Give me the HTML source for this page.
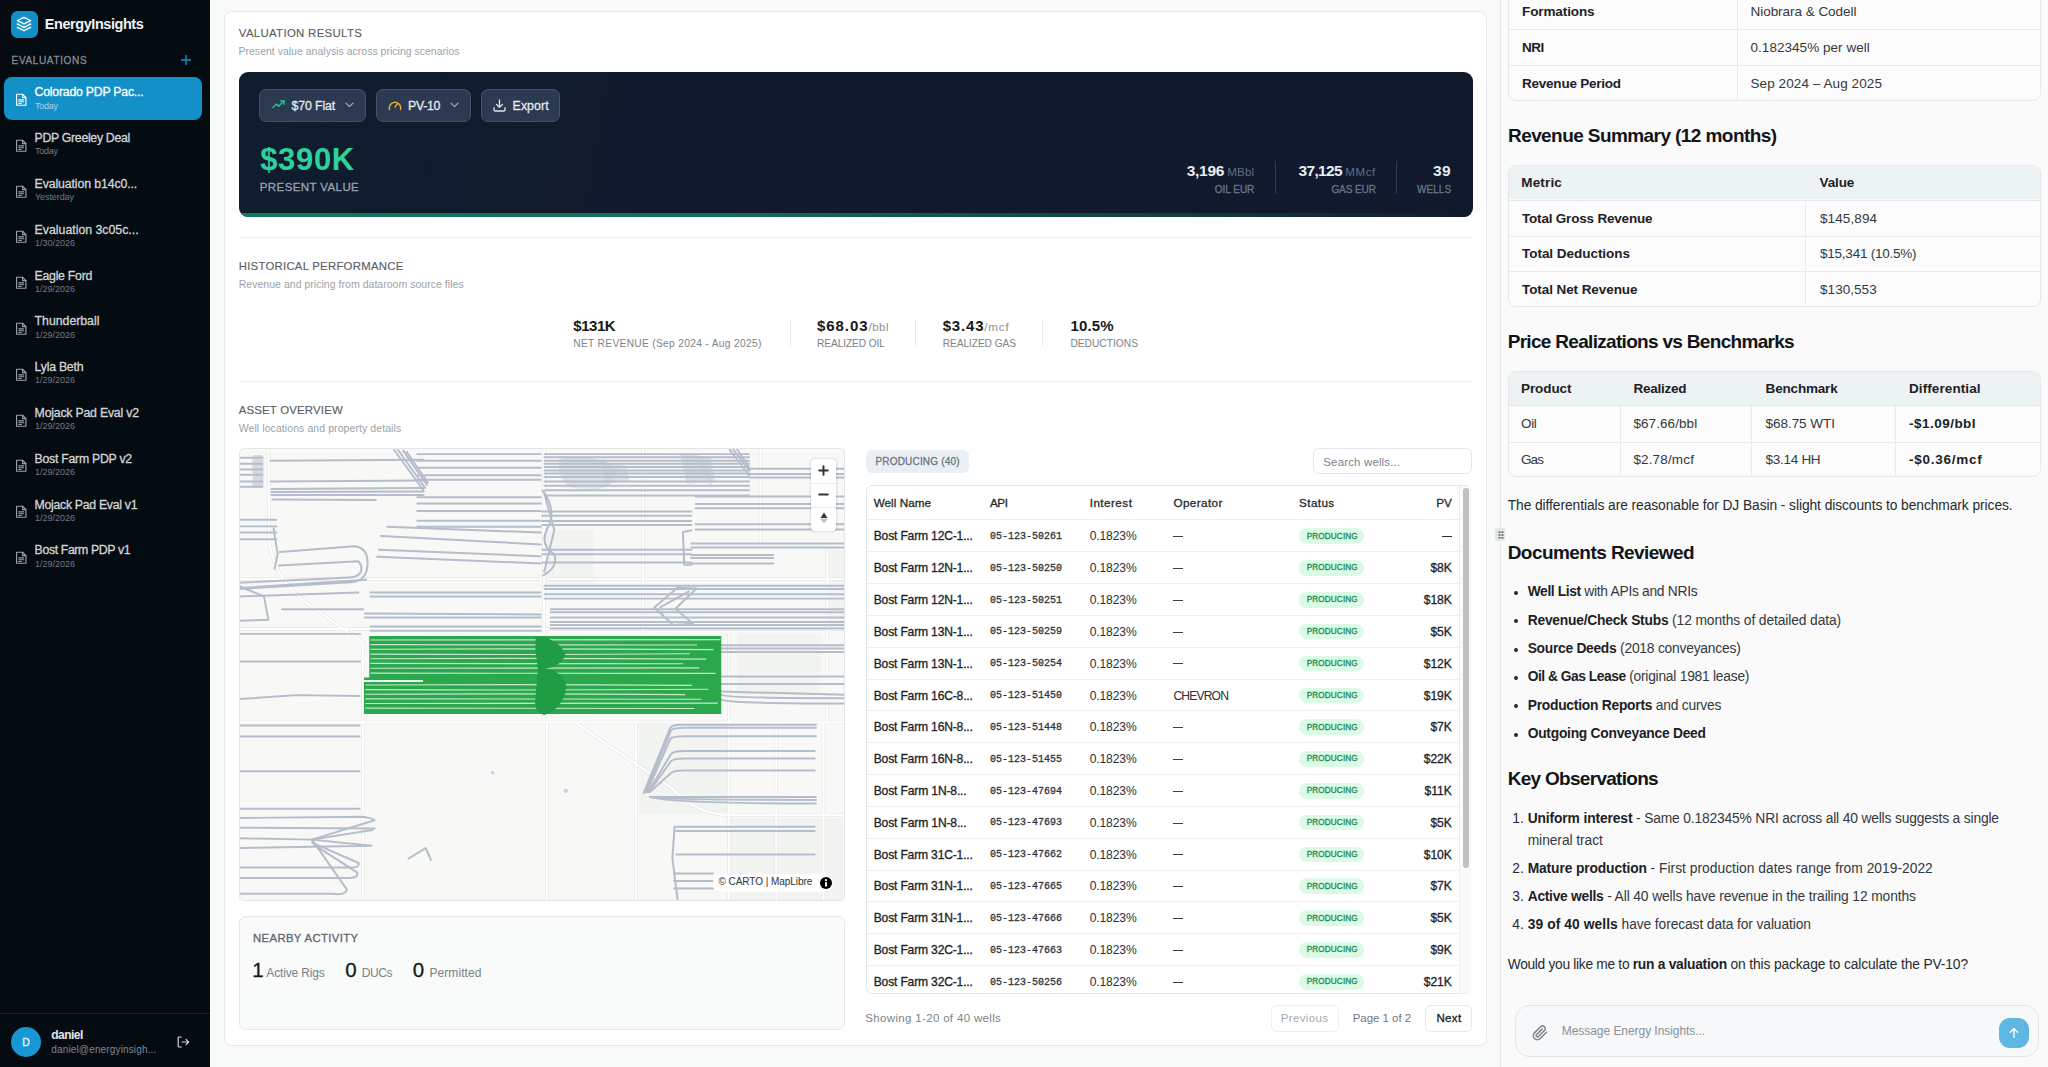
<!DOCTYPE html>
<html><head><meta charset="utf-8"><style>
*{box-sizing:border-box;margin:0;padding:0}
html,body{width:2048px;height:1067px;overflow:hidden;background:#f8f9f9;font-family:"Liberation Sans",sans-serif;color:#111}
.abs{position:absolute}
.t{position:absolute;line-height:1;white-space:nowrap}
.m{font-family:"Liberation Mono",monospace}
.sw{-webkit-text-stroke:0.3px currentColor}
.sw2{-webkit-text-stroke:0.12px currentColor}
</style></head><body>
<div class="abs" style="left:0px;top:0px;width:210px;height:1067px;background:#040c12"></div>
<div class="abs" style="left:11px;top:11px;width:26.6px;height:26.6px;border-radius:6.5px;background:#1190c8"><svg width="26" height="26" viewBox="0 0 26 26"><g fill="none" stroke="#fff" stroke-width="1.5" stroke-linejoin="round" stroke-linecap="round"><path d="M13 6.3 L19.6 9.6 L13 12.9 L6.4 9.6 Z"/><path d="M6.4 13 L13 16.3 L19.6 13"/><path d="M6.4 16.3 L13 19.6 L19.6 16.3"/></g></svg></div>
<div id="w1" class="t" style="left:44.8px;top:16.93px;font-size:14.5px;color:#f1f3f5;font-weight:700;letter-spacing:-0.442px;">EnergyInsights</div>
<div id="w2" class="t sw" style="left:11.6px;top:55.53px;font-size:10px;color:#858b92;letter-spacing:0.645px;">EVALUATIONS</div>
<svg class="abs" style="left:180px;top:54px" width="12" height="12" viewBox="0 0 12 12"><path d="M6 1.5V10.5M1.5 6H10.5" stroke="#1591c9" stroke-width="1.4" stroke-linecap="round"/></svg>
<div class="abs" style="left:4px;top:77.3px;width:198px;height:43px;background:#1390c8;border-radius:8px"></div>
<svg class="abs" style="left:14.6px;top:92.9px" width="12.5" height="13.5" viewBox="0 0 12 13"><g fill="none" stroke="#ffffff" stroke-width="1.1" stroke-linejoin="round" stroke-linecap="round"><path d="M1.5 1.2 H7.3 L10.5 4.4 V11.8 H1.5 Z"/><path d="M7.3 1.2 V4.4 H10.5"/><path d="M3.6 6.6 H8.3 M3.6 8.4 H8.3 M3.6 10.1 H6"/></g></svg>
<div id="w3" class="t sw" style="left:34.6px;top:86.39px;font-size:12.3px;color:#ffffff;letter-spacing:-0.236px;">Colorado PDP Pac...</div>
<div id="w4" class="t" style="left:35.0px;top:101.58px;font-size:9px;color:#a6d3ea;letter-spacing:-0.256px;">Today</div>
<svg class="abs" style="left:14.6px;top:138.7px" width="12.5" height="13.5" viewBox="0 0 12 13"><g fill="none" stroke="#9aa0a6" stroke-width="1.1" stroke-linejoin="round" stroke-linecap="round"><path d="M1.5 1.2 H7.3 L10.5 4.4 V11.8 H1.5 Z"/><path d="M7.3 1.2 V4.4 H10.5"/><path d="M3.6 6.6 H8.3 M3.6 8.4 H8.3 M3.6 10.1 H6"/></g></svg>
<div id="w5" class="t sw" style="left:34.6px;top:132.19px;font-size:12.3px;color:#d2d5d8;letter-spacing:-0.310px;">PDP Greeley Deal</div>
<div id="w6" class="t" style="left:35.0px;top:147.38px;font-size:9px;color:#737980;letter-spacing:-0.256px;">Today</div>
<svg class="abs" style="left:14.6px;top:184.5px" width="12.5" height="13.5" viewBox="0 0 12 13"><g fill="none" stroke="#9aa0a6" stroke-width="1.1" stroke-linejoin="round" stroke-linecap="round"><path d="M1.5 1.2 H7.3 L10.5 4.4 V11.8 H1.5 Z"/><path d="M7.3 1.2 V4.4 H10.5"/><path d="M3.6 6.6 H8.3 M3.6 8.4 H8.3 M3.6 10.1 H6"/></g></svg>
<div id="w7" class="t sw" style="left:34.6px;top:177.99px;font-size:12.3px;color:#d2d5d8;letter-spacing:-0.106px;">Evaluation b14c0...</div>
<div id="w8" class="t" style="left:35.0px;top:193.18px;font-size:9px;color:#737980;letter-spacing:-0.087px;">Yesterday</div>
<svg class="abs" style="left:14.6px;top:230.3px" width="12.5" height="13.5" viewBox="0 0 12 13"><g fill="none" stroke="#9aa0a6" stroke-width="1.1" stroke-linejoin="round" stroke-linecap="round"><path d="M1.5 1.2 H7.3 L10.5 4.4 V11.8 H1.5 Z"/><path d="M7.3 1.2 V4.4 H10.5"/><path d="M3.6 6.6 H8.3 M3.6 8.4 H8.3 M3.6 10.1 H6"/></g></svg>
<div id="w9" class="t sw" style="left:34.6px;top:223.79px;font-size:12.3px;color:#d2d5d8;letter-spacing:0.005px;">Evaluation 3c05c...</div>
<div id="w10" class="t" style="left:35.0px;top:238.98px;font-size:9px;color:#737980;letter-spacing:-0.007px;">1/30/2026</div>
<svg class="abs" style="left:14.6px;top:276.1px" width="12.5" height="13.5" viewBox="0 0 12 13"><g fill="none" stroke="#9aa0a6" stroke-width="1.1" stroke-linejoin="round" stroke-linecap="round"><path d="M1.5 1.2 H7.3 L10.5 4.4 V11.8 H1.5 Z"/><path d="M7.3 1.2 V4.4 H10.5"/><path d="M3.6 6.6 H8.3 M3.6 8.4 H8.3 M3.6 10.1 H6"/></g></svg>
<div id="w11" class="t sw" style="left:34.6px;top:269.59px;font-size:12.3px;color:#d2d5d8;letter-spacing:-0.272px;">Eagle Ford</div>
<div id="w12" class="t" style="left:35.0px;top:284.78px;font-size:9px;color:#737980;letter-spacing:-0.007px;">1/29/2026</div>
<svg class="abs" style="left:14.6px;top:321.9px" width="12.5" height="13.5" viewBox="0 0 12 13"><g fill="none" stroke="#9aa0a6" stroke-width="1.1" stroke-linejoin="round" stroke-linecap="round"><path d="M1.5 1.2 H7.3 L10.5 4.4 V11.8 H1.5 Z"/><path d="M7.3 1.2 V4.4 H10.5"/><path d="M3.6 6.6 H8.3 M3.6 8.4 H8.3 M3.6 10.1 H6"/></g></svg>
<div id="w13" class="t sw" style="left:34.6px;top:315.39px;font-size:12.3px;color:#d2d5d8;letter-spacing:-0.015px;">Thunderball</div>
<div id="w14" class="t" style="left:35.0px;top:330.58px;font-size:9px;color:#737980;letter-spacing:-0.007px;">1/29/2026</div>
<svg class="abs" style="left:14.6px;top:367.7px" width="12.5" height="13.5" viewBox="0 0 12 13"><g fill="none" stroke="#9aa0a6" stroke-width="1.1" stroke-linejoin="round" stroke-linecap="round"><path d="M1.5 1.2 H7.3 L10.5 4.4 V11.8 H1.5 Z"/><path d="M7.3 1.2 V4.4 H10.5"/><path d="M3.6 6.6 H8.3 M3.6 8.4 H8.3 M3.6 10.1 H6"/></g></svg>
<div id="w15" class="t sw" style="left:34.6px;top:361.19px;font-size:12.3px;color:#d2d5d8;letter-spacing:-0.241px;">Lyla Beth</div>
<div id="w16" class="t" style="left:35.0px;top:376.38px;font-size:9px;color:#737980;letter-spacing:-0.007px;">1/29/2026</div>
<svg class="abs" style="left:14.6px;top:413.5px" width="12.5" height="13.5" viewBox="0 0 12 13"><g fill="none" stroke="#9aa0a6" stroke-width="1.1" stroke-linejoin="round" stroke-linecap="round"><path d="M1.5 1.2 H7.3 L10.5 4.4 V11.8 H1.5 Z"/><path d="M7.3 1.2 V4.4 H10.5"/><path d="M3.6 6.6 H8.3 M3.6 8.4 H8.3 M3.6 10.1 H6"/></g></svg>
<div id="w17" class="t sw" style="left:34.6px;top:406.99px;font-size:12.3px;color:#d2d5d8;letter-spacing:-0.212px;">Mojack Pad Eval v2</div>
<div id="w18" class="t" style="left:35.0px;top:422.18px;font-size:9px;color:#737980;letter-spacing:-0.007px;">1/29/2026</div>
<svg class="abs" style="left:14.6px;top:459.3px" width="12.5" height="13.5" viewBox="0 0 12 13"><g fill="none" stroke="#9aa0a6" stroke-width="1.1" stroke-linejoin="round" stroke-linecap="round"><path d="M1.5 1.2 H7.3 L10.5 4.4 V11.8 H1.5 Z"/><path d="M7.3 1.2 V4.4 H10.5"/><path d="M3.6 6.6 H8.3 M3.6 8.4 H8.3 M3.6 10.1 H6"/></g></svg>
<div id="w19" class="t sw" style="left:34.6px;top:452.79px;font-size:12.3px;color:#d2d5d8;letter-spacing:-0.273px;">Bost Farm PDP v2</div>
<div id="w20" class="t" style="left:35.0px;top:467.98px;font-size:9px;color:#737980;letter-spacing:-0.007px;">1/29/2026</div>
<svg class="abs" style="left:14.6px;top:505.1px" width="12.5" height="13.5" viewBox="0 0 12 13"><g fill="none" stroke="#9aa0a6" stroke-width="1.1" stroke-linejoin="round" stroke-linecap="round"><path d="M1.5 1.2 H7.3 L10.5 4.4 V11.8 H1.5 Z"/><path d="M7.3 1.2 V4.4 H10.5"/><path d="M3.6 6.6 H8.3 M3.6 8.4 H8.3 M3.6 10.1 H6"/></g></svg>
<div id="w21" class="t sw" style="left:34.6px;top:498.59px;font-size:12.3px;color:#d2d5d8;letter-spacing:-0.300px;">Mojack Pad Eval v1</div>
<div id="w22" class="t" style="left:35.0px;top:513.78px;font-size:9px;color:#737980;letter-spacing:-0.007px;">1/29/2026</div>
<svg class="abs" style="left:14.6px;top:550.9px" width="12.5" height="13.5" viewBox="0 0 12 13"><g fill="none" stroke="#9aa0a6" stroke-width="1.1" stroke-linejoin="round" stroke-linecap="round"><path d="M1.5 1.2 H7.3 L10.5 4.4 V11.8 H1.5 Z"/><path d="M7.3 1.2 V4.4 H10.5"/><path d="M3.6 6.6 H8.3 M3.6 8.4 H8.3 M3.6 10.1 H6"/></g></svg>
<div id="w23" class="t sw" style="left:34.6px;top:544.39px;font-size:12.3px;color:#d2d5d8;letter-spacing:-0.374px;">Bost Farm PDP v1</div>
<div id="w24" class="t" style="left:35.0px;top:559.58px;font-size:9px;color:#737980;letter-spacing:-0.007px;">1/29/2026</div>
<div class="abs" style="left:0px;top:1013px;width:210px;height:1px;background:#1a2026"></div>
<div class="abs" style="left:11px;top:1027px;width:30px;height:30px;border-radius:50%;background:#1797d3"></div>
<div class="t sw" style="left:22.3px;top:1037.11px;font-size:10.5px;color:#eaf6fc;">D</div>
<div id="w25" class="t" style="left:51.3px;top:1029.04px;font-size:12px;color:#e3e5e8;font-weight:700;letter-spacing:-0.536px;">daniel</div>
<div id="w26" class="t" style="left:51.3px;top:1044.74px;font-size:10px;color:#80868c;letter-spacing:0.148px;">daniel@energyinsigh...</div>
<svg class="abs" style="left:176.5px;top:1036px" width="13" height="12" viewBox="0 0 13 12"><g fill="none" stroke="#d5d8db" stroke-width="1.2" stroke-linecap="round" stroke-linejoin="round"><path d="M4.3 1H2.2Q1.2 1 1.2 2V10Q1.2 11 2.2 11H4.3"/><path d="M5 6H11.6M9 3.4L11.6 6L9 8.6"/></g></svg>
<div class="abs" style="left:224px;top:11px;width:1263px;height:1035px;background:#fff;border:1px solid #e7e9ea;border-radius:8px"></div>
<div id="w27" class="t sw2" style="left:238.8px;top:28.15px;font-size:11.4px;color:#575d63;letter-spacing:0.329px;">VALUATION RESULTS</div>
<div id="w28" class="t" style="left:238.5px;top:45.81px;font-size:10.5px;color:#9ca2a8;letter-spacing:0.009px;">Present value analysis across pricing scenarios</div>
<div class="abs" style="left:238.5px;top:71.7px;width:1234.3px;height:145px;border-radius:9px;overflow:hidden;background:linear-gradient(100deg,#0f1d2e 0%,#111a2c 40%,#111a2c 100%)"><div class="abs" style="left:0;bottom:0;width:100%;height:4px;background:linear-gradient(90deg,#13795c 0%,#136d58 40%,#12303a 85%,#111a2c 100%)"></div></div>
<div class="abs" style="left:259.3px;top:89.1px;width:106.5px;height:33.2px;background:#2b3a51;border:1px solid #44536b;border-radius:7px"></div><svg class="abs" style="left:271.5px;top:100px" width="13" height="9" viewBox="0 0 13 9"><g fill="none" stroke="#2ec99a" stroke-width="1.3" stroke-linecap="round" stroke-linejoin="round"><path d="M0.8 7.6L4.4 4L6.6 6.2L12 0.9"/><path d="M8.6 0.9H12V4.2"/></g></svg><div id="w29" class="t sw" style="left:291.6px;top:99.79px;font-size:12.3px;color:#e6e9ee;letter-spacing:-0.121px;">$70 Flat</div><svg class="abs" style="left:344.5px;top:102px" width="9" height="6" viewBox="0 0 9 6"><path d="M1 1.2L4.5 4.6L8 1.2" fill="none" stroke="#aab3c0" stroke-width="1.1" stroke-linecap="round" stroke-linejoin="round"/></svg>
<div class="abs" style="left:376px;top:89.1px;width:94.7px;height:33.2px;background:#2b3a51;border:1px solid #44536b;border-radius:7px"></div><svg class="abs" style="left:387.5px;top:98.5px" width="14" height="12" viewBox="0 0 14 12"><g fill="none" stroke="#eaa72a" stroke-width="1.4" stroke-linecap="round"><path d="M1.5 10.5A5.7 5.7 0 1 1 12.5 10.5"/><path d="M7 8L9.6 4.6"/></g></svg><div id="w30" class="t sw" style="left:408.0px;top:99.79px;font-size:12.3px;color:#e6e9ee;letter-spacing:-0.300px;">PV-10</div><svg class="abs" style="left:450px;top:102px" width="9" height="6" viewBox="0 0 9 6"><path d="M1 1.2L4.5 4.6L8 1.2" fill="none" stroke="#aab3c0" stroke-width="1.1" stroke-linecap="round" stroke-linejoin="round"/></svg>
<div class="abs" style="left:481px;top:89.1px;width:79px;height:33.2px;background:#2b3a51;border:1px solid #44536b;border-radius:7px"></div><svg class="abs" style="left:493px;top:98.5px" width="13" height="13" viewBox="0 0 13 13"><g fill="none" stroke="#dfe4ea" stroke-width="1.3" stroke-linecap="round" stroke-linejoin="round"><path d="M6.5 1V8.3M3.6 5.5L6.5 8.4L9.4 5.5"/><path d="M1 8.6V10.8Q1 12 2.2 12H10.8Q12 12 12 10.8V8.6"/></g></svg><div id="w31" class="t sw" style="left:512.6px;top:99.79px;font-size:12.3px;color:#e6e9ee;letter-spacing:0.089px;">Export</div>
<div id="w32" class="t" style="left:260.2px;top:144.26px;font-size:31px;color:#2fd09b;font-weight:700;letter-spacing:0.662px;">$390K</div>
<div id="w33" class="t sw" style="left:259.8px;top:182.37px;font-size:11.5px;color:#97a3b4;letter-spacing:0.403px;">PRESENT VALUE</div>
<div class="t" style="right:793.7px;top:162.88px;font-size:15.5px;color:#e9edf2;"><span id="w34" style="font-weight:700;letter-spacing:-0.273px;">3,196</span><span style="font-size:11.5px"> </span><span id="w35" style="color:#5f6e85;letter-spacing:0.199px;font-size:11.5px;">MBbl</span></div><div id="w36" class="t sw" style="right:793.7px;top:184.63px;font-size:10px;color:#66758a;letter-spacing:-0.007px;margin-right:0.007px;">OIL EUR</div>
<div class="abs" style="left:1275px;top:161.4px;width:1px;height:33px;background:#2f3b4f"></div>
<div class="t" style="right:672.1px;top:162.88px;font-size:15.5px;color:#e9edf2;"><span id="w37" style="font-weight:700;letter-spacing:-0.664px;">37,125</span><span style="font-size:11.5px"> </span><span id="w38" style="color:#5f6e85;letter-spacing:0.665px;font-size:11.5px;">MMcf</span></div><div id="w39" class="t sw" style="right:672.1px;top:184.63px;font-size:10px;color:#66758a;letter-spacing:-0.087px;margin-right:0.087px;">GAS EUR</div>
<div class="abs" style="left:1396.3px;top:161.4px;width:1px;height:33px;background:#2f3b4f"></div>
<div class="t" style="right:596.9px;top:162.88px;font-size:15.5px;color:#e9edf2;"><span id="w40" style="font-weight:700;letter-spacing:0.444px;">39</span></div><div id="w41" class="t sw" style="right:596.9px;top:184.63px;font-size:10px;color:#66758a;letter-spacing:0.022px;margin-right:-0.022px;">WELLS</div>
<div class="abs" style="left:238.5px;top:237px;width:1234.3px;height:1px;background:#eef0f1"></div>
<div id="w42" class="t sw2" style="left:238.7px;top:260.65px;font-size:11.4px;color:#575d63;letter-spacing:0.243px;">HISTORICAL PERFORMANCE</div>
<div id="w43" class="t" style="left:238.7px;top:278.81px;font-size:10.5px;color:#9ca2a8;letter-spacing:0.032px;">Revenue and pricing from dataroom source files</div>
<div class="t" style="left:573.3px;top:318.20px;font-size:15px;color:#16191c;"><span id="w44" style="font-weight:700;letter-spacing:-0.451px;">$131K</span></div><div id="w45" class="t" style="left:573.3px;top:339.47px;font-size:10.2px;color:#7c8389;letter-spacing:0.324px;">NET REVENUE (Sep 2024 - Aug 2025)</div>
<div class="abs" style="left:789.6px;top:319.4px;width:1px;height:27px;background:#e8eaec"></div>
<div class="t" style="left:817.0px;top:318.20px;font-size:15px;color:#16191c;"><span id="w46" style="font-weight:700;letter-spacing:0.942px;">$68.03</span><span id="w47" style="color:#8a9096;letter-spacing:0.485px;font-size:11.5px;">/bbl</span></div><div id="w48" class="t" style="left:817.0px;top:339.47px;font-size:10.2px;color:#7c8389;letter-spacing:-0.098px;">REALIZED OIL</div>
<div class="abs" style="left:915.2px;top:319.4px;width:1px;height:27px;background:#e8eaec"></div>
<div class="t" style="left:942.7px;top:318.20px;font-size:15px;color:#16191c;"><span id="w49" style="font-weight:700;letter-spacing:0.814px;">$3.43</span><span id="w50" style="color:#8a9096;letter-spacing:0.857px;font-size:11.5px;">/mcf</span></div><div id="w51" class="t" style="left:942.7px;top:339.47px;font-size:10.2px;color:#7c8389;letter-spacing:-0.079px;">REALIZED GAS</div>
<div class="abs" style="left:1042.4px;top:319.4px;width:1px;height:27px;background:#e8eaec"></div>
<div class="t" style="left:1070.4px;top:318.20px;font-size:15px;color:#16191c;"><span id="w52" style="font-weight:700;letter-spacing:0.191px;">10.5%</span></div><div id="w53" class="t" style="left:1070.4px;top:339.47px;font-size:10.2px;color:#7c8389;letter-spacing:0.027px;">DEDUCTIONS</div>
<div class="abs" style="left:238.5px;top:380.9px;width:1234.3px;height:1px;background:#eef0f1"></div>
<div id="w54" class="t sw2" style="left:238.7px;top:404.65px;font-size:11.4px;color:#575d63;letter-spacing:0.192px;">ASSET OVERVIEW</div>
<div id="w55" class="t" style="left:238.7px;top:423.11px;font-size:10.5px;color:#9ca2a8;letter-spacing:0.082px;">Well locations and property details</div>
<svg class="abs" style="left:238.5px;top:448.4px" width="606.8" height="453" viewBox="19.3 19.1 1377.4 1028.2" preserveAspectRatio="none"><rect x="19.3" y="19.1" width="1377.4" height="1028.2" fill="#f8f8f6"/><g fill="#f2f4f1"><rect x="708" y="206" width="116" height="121"/><rect x="925" y="645" width="205" height="205"/><rect x="1135" y="860" width="255" height="185"/><rect x="1360" y="250" width="35" height="180"/><rect x="1150" y="440" width="190" height="140"/></g><g fill="#c9cfd7"><path d="M745 45 Q790 30 850 50 L880 70 Q870 110 830 112 L775 110 Q742 95 745 45Z" opacity="0.55"/><path d="M840 50 L900 60 L905 95 L850 100Z" opacity="0.5"/><rect x="50" y="35" width="25" height="75" rx="6" opacity="0.7"/><path d="M1020 30 L1090 40 L1100 95 L1035 100Z" opacity="0.6"/><path d="M1065 45 Q1100 90 1090 110" opacity="0.5"/><circle cx="595" cy="756" r="4"/><circle cx="761" cy="797" r="5"/></g><g fill="none" stroke="#e2e2df" stroke-width="7.5"><path d="M86 19 L88 230 Q100 330 200 390 L300 460 L300 1047"/><path d="M19 642 L1395 642"/><path d="M712 19 L712 640"/><path d="M718 642 L718 1047"/><path d="M920 642 L920 1047"/><path d="M937 19 L937 440"/><path d="M1203 19 L1203 240"/><path d="M1355 240 L1355 642"/><path d="M1131 440 L1131 1047"/><path d="M1239 642 L1239 1047"/><path d="M1346 642 L1346 1047"/><path d="M781 642 L1000 790 Q1060 852 1130 852 L1395 852"/><path d="M19 430 L1395 430"/><path d="M19 317 L700 317"/><path d="M720 317 L1395 317"/></g><g fill="none" stroke="#ffffff" stroke-width="5"><path d="M86 19 L88 230 Q100 330 200 390 L300 460 L300 1047"/><path d="M19 642 L1395 642"/><path d="M712 19 L712 640"/><path d="M718 642 L718 1047"/><path d="M920 642 L920 1047"/><path d="M937 19 L937 440"/><path d="M1203 19 L1203 240"/><path d="M1355 240 L1355 642"/><path d="M1131 440 L1131 1047"/><path d="M1239 642 L1239 1047"/><path d="M1346 642 L1346 1047"/><path d="M781 642 L1000 790 Q1060 852 1130 852 L1395 852"/><path d="M19 430 L1395 430"/><path d="M19 317 L700 317"/><path d="M720 317 L1395 317"/></g><g fill="none" stroke="#b4bdca" stroke-width="4.5" stroke-linecap="round" stroke-linejoin="round"><path d="M19 41 L72 41"/><path d="M19 55 L72 55"/><path d="M19 68 L72 68"/><path d="M19 80 L72 80"/><path d="M19 95 L72 95"/><path d="M19 107 L72 107"/><path d="M91 48 L438 46"/><path d="M91 95 L438 93"/><path d="M93 112 L438 110"/><path d="M93 119 L438 118"/><path d="M93 126 L438 126"/><path d="M95 136 L330 137"/><path d="M371 23 L438 115"/><path d="M380 23 L442 110"/><path d="M392 25 L446 103"/><path d="M400 28 L448 98"/><path d="M424 33 L704 33"/><path d="M424 48 L704 48"/><path d="M424 64 L704 64"/><path d="M424 81 L704 81"/><path d="M424 91 L704 91"/><path d="M424 131 L704 131"/><path d="M424 145 L704 145"/><path d="M424 162 L704 162"/><path d="M424 184 L704 184"/><path d="M424 198 L704 198"/><path d="M356 198 L704 211"/><path d="M342 219 L704 238"/><path d="M337 250 L704 265"/><path d="M333 266 L704 281"/><path d="M112 255 L281 242 Q313 245 311 284 Q309 322 272 324 L19 339"/><path d="M110 286 L290 276 Q300 285 296 300 Q290 312 270 313 L19 325"/><path d="M19 182 L104 182"/><path d="M19 197 L104 197"/><path d="M19 211 L104 211"/><path d="M19 226 L104 226"/><path d="M98 202 L107 260 L100 293"/><path d="M18 337 L308 318"/><path d="M18 356 L290 347"/><path d="M117 385 L301 385"/><path d="M18 332 L76 356 L86 409 L18 411"/><path d="M18 441 L294 441"/><path d="M18 503.5 L294 503.5"/><path d="M18 589 L150 580 L293 582"/><path d="M318 347 L704 347"/><path d="M318 356 L704 356"/><path d="M305 395 L704 397"/><path d="M305 404 L704 404"/><path d="M318 424 L704 424"/><path d="M318 434 L704 434"/><path d="M713 33 L1177 33"/><path d="M713 40 L1177 40"/><path d="M713 48 L1177 48"/><path d="M713 55 L1177 55"/><path d="M713 62 L1177 62"/><path d="M713 70 L1177 70"/><path d="M713 77 L1177 77"/><path d="M713 85 L1177 85"/><path d="M713 95 L1177 95"/><path d="M713 105 L1177 105"/><path d="M713 115 L1177 115"/><path d="M713 127 L1177 127"/><path d="M1177 66 L1394 66"/><path d="M1177 78 L1394 78"/><path d="M1177 86 L1394 86"/><path d="M1133 23 L1177 81"/><path d="M1140 21 L1178 70"/><path d="M1150 22 L1176 60"/><path d="M1056 129 L1394 129"/><path d="M1056 146 L1394 146"/><path d="M1056 156 L1394 156"/><path d="M1056 192 L1394 192"/><path d="M1056 204 L1394 204"/><path d="M708 163 L1046 163"/><path d="M708 173 L1046 173"/><path d="M708 185 L1046 185"/><path d="M708 194 L1046 194"/><path d="M1046 206 L1027 210 L1030 284 L1046 284"/><path d="M1046 236 L1394 236"/><path d="M1046 245 L1394 245"/><path d="M708 250 L1046 250"/><path d="M708 260 L1046 260"/><path d="M708 279 L1046 279"/><path d="M1046 262 L1232 262"/><path d="M1046 269 L1232 269"/><path d="M1046 281 L1232 281"/><path d="M708 115 Q742 160 720 200 Q700 240 735 260 Q745 290 710 308"/><path d="M712 120 L735 205 L712 300"/><path d="M713 332 L1394 332"/><path d="M713 339 L1394 339"/><path d="M713 351 L1394 351"/><path d="M713 361 L1394 361"/><path d="M727 385 L1394 385"/><path d="M727 392 L1394 392"/><path d="M727 404 L1394 404"/><path d="M727 414 L1394 414"/><path d="M727 421 L1394 421"/><path d="M727 429 L1394 429"/><path d="M962 381 L1015 336 L1058 338 L1010 384 L1050 418 L1005 421 Z"/><path d="M975 381 L1040 345"/><path d="M1114 467 L1394 467"/><path d="M1114 474 L1394 474"/><path d="M1114 482 L1394 482"/><path d="M18 649 L293 649"/><path d="M18 674 L293 674"/><path d="M18 753 L293 753"/><path d="M18 838 L293 838"/><path d="M18 859 L300 856 Q325 860 327 864 L185 908"/><path d="M18 881 L327 883"/><path d="M18 905 L185 908 L322 886"/><path d="M18 927 L320 922 L185 908"/><path d="M185 908 L264 1021 Q262 1035 231 1031 L18 1031"/><path d="M185 915 L291 961 Q292 972 276 971 L18 971"/><path d="M190 920 L288 983 Q290 995 270 995 L18 995"/><path d="M404 951 L443 927 L455 954"/><path d="M1114 538 L1394 538"/><path d="M1114 555 L1394 555"/><path d="M1114 579 Q1125 587 1394 587"/><path d="M1114 590 Q1130 599 1394 599"/><path d="M1114 572 L1394 579"/><path d="M938 802 L998 655 Q1002 647 1020 647 L1329 647"/><path d="M942 801 L1000 660 Q1006 654 1030 654 L1329 654"/><path d="M945 800 L998 680 Q1003 673.5 1030 673.5 L1329 673.5"/><path d="M948 800 L1000 714 Q1006 707 1030 707 L1326 707"/><path d="M950 800 L1000 730 Q1006 724 1030 724 L1326 724"/><path d="M952 800 L1000 757 Q1006 751 1030 751 L1326 751"/><path d="M952 811 L1329 811"/><path d="M952 811 Q990 818 1329 818"/><path d="M952 811 Q1000 826 1329 826"/><path d="M1012 879 L1326 879"/><path d="M1012 888.5 L1326 888.5"/><path d="M1012 941.6 L1326 941.6"/><path d="M1007 985 L1095 985"/><path d="M1007 1002 L1095 1002"/><path d="M1007 1019 L1095 1019"/><path d="M1008 879 L1003 950 L1015 1045"/></g><path d="M315 446 L1114 446 L1114 623 L303 623 L303 540 L315 540 Z" fill="#2aa84b"/><g fill="none" stroke="#d9f0de" stroke-width="2.6" opacity="0.9"><path d="M318 455 Q700 453 1112 454.2"/><path d="M318 465.5 Q700 467.5 1059 466.3"/><path d="M318 476 Q700 474 1096 476.8"/><path d="M318 487 Q700 489 1043 486.2"/><path d="M318 497.5 Q700 495.5 1080 498.3"/><path d="M318 508 Q700 510 1027 508.8"/><path d="M318 519 Q700 517 1064 518.2"/><path d="M318 530 Q700 532 1101 530.8"/><path d="M306 557 Q700 555 1048 557.8"/><path d="M306 567.5 Q700 569.5 1085 566.7"/><path d="M306 578 Q700 576 1032 578.8"/><path d="M306 588.5 Q700 590.5 1069 589.3"/><path d="M306 599 Q700 597 1106 598.2"/><path d="M306 609.5 Q700 611.5 1053 610.3"/></g><path d="M303 548 L437 548" stroke="#eef6f0" stroke-width="5"/><path d="M693 446 Q740 450 760 485 Q757 512 715 520 Q762 530 762 562 Q755 612 712 625 Q688 618 692 588 L698 522 L692 480Z" fill="#1f9d44"/></svg>
<div class="abs" style="left:238.5px;top:448.4px;width:606.8px;height:453px;border:1px solid #e3e5e7;border-radius:6px"></div>
<div class="abs" style="left:811.2px;top:458.7px;width:24.4px;height:72.3px;background:#fff;border-radius:4px;box-shadow:0 0 0 1.5px rgba(0,0,0,0.07)"><div class="abs" style="left:0;top:24px;width:24.4px;height:1px;background:#ececec"></div><div class="abs" style="left:0;top:48px;width:24.4px;height:1px;background:#ececec"></div></div>
<svg class="abs" style="left:818px;top:465px" width="11" height="11" viewBox="0 0 11 11"><path d="M5.5 1.2V9.8M1.2 5.5H9.8" stroke="#333" stroke-width="2" stroke-linecap="round"/></svg>
<svg class="abs" style="left:818px;top:489px" width="11" height="11" viewBox="0 0 11 11"><path d="M1.2 5.5H9.8" stroke="#333" stroke-width="2" stroke-linecap="round"/></svg>
<svg class="abs" style="left:818.5px;top:511px" width="10" height="14" viewBox="0 0 10 14"><path d="M5 1.5L8.5 7H1.5Z" fill="#333"/><path d="M5 12.5L8.5 7.8H1.5Z" fill="#bbb"/></svg>
<div class="abs" style="left:713px;top:873.7px;width:119.8px;height:18.3px;background:rgba(255,255,255,0.85);border-radius:9px"></div>
<div id="w56" class="t" style="left:718.4px;top:877.33px;font-size:10px;color:#333;letter-spacing:-0.037px;">© CARTO | MapLibre</div>
<svg class="abs" style="left:820.2px;top:876.7px" width="12" height="12" viewBox="0 0 12 12"><circle cx="6" cy="6" r="6" fill="#000"/><circle cx="6" cy="3.2" r="1.1" fill="#fff"/><rect x="5" y="5" width="2" height="4.6" rx="0.6" fill="#fff"/></svg>
<div class="abs" style="left:238.5px;top:915.5px;width:606.8px;height:114.5px;background:#f9fafa;border:1px solid #e5e7e9;border-radius:7px"></div>
<div id="w57" class="t sw" style="left:253.0px;top:932.93px;font-size:11.3px;color:#5f666c;letter-spacing:0.385px;">NEARBY ACTIVITY</div>
<div class="t sw" style="left:252.3px;top:960.15px;font-size:20.5px;color:#16191c;">1</div>
<div id="w58" class="t" style="left:266.3px;top:967.34px;font-size:12px;color:#7a8187;letter-spacing:-0.153px;">Active Rigs</div>
<div class="t sw" style="left:345.3px;top:960.15px;font-size:20.5px;color:#16191c;">0</div>
<div id="w59" class="t" style="left:361.7px;top:967.34px;font-size:12px;color:#7a8187;letter-spacing:-0.402px;">DUCs</div>
<div class="t sw" style="left:412.7px;top:960.15px;font-size:20.5px;color:#16191c;">0</div>
<div id="w60" class="t" style="left:429.4px;top:967.34px;font-size:12px;color:#7a8187;letter-spacing:0.080px;">Permitted</div>
<div class="abs" style="left:866.2px;top:450.2px;width:102.6px;height:22.6px;background:#e9eff3;border-radius:6px"></div>
<div id="w61" class="t sw" style="left:875.5px;top:456.64px;font-size:10px;color:#6b7781;letter-spacing:0.178px;">PRODUCING (40)</div>
<div class="abs" style="left:1312.6px;top:448.4px;width:159.2px;height:26px;background:#fff;border:1px solid #e4e7e9;border-radius:6px"></div>
<div id="w62" class="t" style="left:1323.3px;top:457.27px;font-size:11.5px;color:#7b848c;letter-spacing:0.143px;">Search wells...</div>
<div class="abs" style="left:865.7px;top:485.4px;width:605.7px;height:509px;background:#fff;border:1px solid #e4e6e8;border-radius:6px"></div>
<div class="abs" style="left:1459.4px;top:486.4px;width:11.3px;height:507px;background:#fafafa;border-left:1px solid #eeeff0;border-radius:0 5px 5px 0"></div>
<div class="abs" style="left:1462.8px;top:488.4px;width:6.2px;height:380px;background:#c1c1c1;border-radius:3px"></div>
<div id="w63" class="t sw" style="left:873.7px;top:497.00px;font-size:11.7px;color:#262a2e;letter-spacing:0.056px;">Well Name</div>
<div id="w64" class="t sw" style="left:989.9px;top:497.00px;font-size:11.7px;color:#262a2e;letter-spacing:-0.421px;">API</div>
<div id="w65" class="t sw" style="left:1089.7px;top:497.00px;font-size:11.7px;color:#262a2e;letter-spacing:0.459px;">Interest</div>
<div id="w66" class="t sw" style="left:1173.4px;top:497.00px;font-size:11.7px;color:#262a2e;letter-spacing:0.409px;">Operator</div>
<div id="w67" class="t sw" style="left:1299.1px;top:497.00px;font-size:11.7px;color:#262a2e;letter-spacing:0.373px;">Status</div>
<div class="t sw" style="right:596.1px;top:497.00px;font-size:11.7px;color:#262a2e;">PV</div>
<div class="abs" style="left:866.7px;top:519.3px;width:592.7px;height:1px;background:#eceef0"></div>
<div id="w68" class="t sw" style="left:873.7px;top:530.36px;font-size:12.1px;color:#1e2226;letter-spacing:-0.174px;">Bost Farm 12C-1...</div>
<div class="t m sw" style="left:989.9px;top:531.93px;font-size:10px;color:#30363c;">05-123-50261</div>
<div id="w69" class="t" style="left:1089.7px;top:530.36px;font-size:12.1px;color:#2a2e33;letter-spacing:-0.125px;">0.1823%</div>
<div class="abs" style="left:1173.4px;top:536px;width:9.6px;height:1.2px;background:#3a3e43"></div>
<div class="abs" style="left:1299.3px;top:528.3px;width:65px;height:15.7px;background:#dcfbe6;border-radius:8px"></div>
<div id="w70" class="t sw" style="left:1306.7px;top:532.56px;font-size:8.2px;color:#1f8a4c;letter-spacing:0.120px;">PRODUCING</div>
<div class="abs" style="left:1442.3px;top:536px;width:9.6px;height:1.2px;background:#2a2e33"></div>
<div class="abs" style="left:866.7px;top:551.2px;width:592.7px;height:1px;background:#eef0f1"></div>
<div id="w71" class="t sw" style="left:873.7px;top:562.19px;font-size:12.1px;color:#1e2226;letter-spacing:-0.174px;">Bost Farm 12N-1...</div>
<div class="t m sw" style="left:989.9px;top:563.76px;font-size:10px;color:#30363c;">05-123-50250</div>
<div id="w72" class="t" style="left:1089.7px;top:562.19px;font-size:12.1px;color:#2a2e33;letter-spacing:-0.125px;">0.1823%</div>
<div class="abs" style="left:1173.4px;top:568px;width:9.6px;height:1.2px;background:#3a3e43"></div>
<div class="abs" style="left:1299.3px;top:560.1px;width:65px;height:15.7px;background:#dcfbe6;border-radius:8px"></div>
<div id="w73" class="t sw" style="left:1306.7px;top:564.39px;font-size:8.2px;color:#1f8a4c;letter-spacing:0.120px;">PRODUCING</div>
<div class="t sw" style="right:596.1px;top:562.19px;font-size:12.1px;color:#1e2226;">$8K</div>
<div class="abs" style="left:866.7px;top:583.0px;width:592.7px;height:1px;background:#eef0f1"></div>
<div id="w74" class="t sw" style="left:873.7px;top:594.02px;font-size:12.1px;color:#1e2226;letter-spacing:-0.174px;">Bost Farm 12N-1...</div>
<div class="t m sw" style="left:989.9px;top:595.59px;font-size:10px;color:#30363c;">05-123-50251</div>
<div id="w75" class="t" style="left:1089.7px;top:594.02px;font-size:12.1px;color:#2a2e33;letter-spacing:-0.125px;">0.1823%</div>
<div class="abs" style="left:1173.4px;top:600px;width:9.6px;height:1.2px;background:#3a3e43"></div>
<div class="abs" style="left:1299.3px;top:592.0px;width:65px;height:15.7px;background:#dcfbe6;border-radius:8px"></div>
<div id="w76" class="t sw" style="left:1306.7px;top:596.22px;font-size:8.2px;color:#1f8a4c;letter-spacing:0.120px;">PRODUCING</div>
<div class="t sw" style="right:596.1px;top:594.02px;font-size:12.1px;color:#1e2226;">$18K</div>
<div class="abs" style="left:866.7px;top:614.9px;width:592.7px;height:1px;background:#eef0f1"></div>
<div id="w77" class="t sw" style="left:873.7px;top:625.85px;font-size:12.1px;color:#1e2226;letter-spacing:-0.174px;">Bost Farm 13N-1...</div>
<div class="t m sw" style="left:989.9px;top:627.42px;font-size:10px;color:#30363c;">05-123-50259</div>
<div id="w78" class="t" style="left:1089.7px;top:625.85px;font-size:12.1px;color:#2a2e33;letter-spacing:-0.126px;">0.1823%</div>
<div class="abs" style="left:1173.4px;top:632px;width:9.6px;height:1.2px;background:#3a3e43"></div>
<div class="abs" style="left:1299.3px;top:623.8px;width:65px;height:15.7px;background:#dcfbe6;border-radius:8px"></div>
<div id="w79" class="t sw" style="left:1306.7px;top:628.05px;font-size:8.2px;color:#1f8a4c;letter-spacing:0.120px;">PRODUCING</div>
<div class="t sw" style="right:596.1px;top:625.85px;font-size:12.1px;color:#1e2226;">$5K</div>
<div class="abs" style="left:866.7px;top:646.7px;width:592.7px;height:1px;background:#eef0f1"></div>
<div id="w80" class="t sw" style="left:873.7px;top:657.68px;font-size:12.1px;color:#1e2226;letter-spacing:-0.174px;">Bost Farm 13N-1...</div>
<div class="t m sw" style="left:989.9px;top:659.25px;font-size:10px;color:#30363c;">05-123-50254</div>
<div id="w81" class="t" style="left:1089.7px;top:657.68px;font-size:12.1px;color:#2a2e33;letter-spacing:-0.125px;">0.1823%</div>
<div class="abs" style="left:1173.4px;top:663px;width:9.6px;height:1.2px;background:#3a3e43"></div>
<div class="abs" style="left:1299.3px;top:655.6px;width:65px;height:15.7px;background:#dcfbe6;border-radius:8px"></div>
<div id="w82" class="t sw" style="left:1306.7px;top:659.88px;font-size:8.2px;color:#1f8a4c;letter-spacing:0.120px;">PRODUCING</div>
<div class="t sw" style="right:596.1px;top:657.68px;font-size:12.1px;color:#1e2226;">$12K</div>
<div class="abs" style="left:866.7px;top:678.5px;width:592.7px;height:1px;background:#eef0f1"></div>
<div id="w83" class="t sw" style="left:873.7px;top:689.51px;font-size:12.1px;color:#1e2226;letter-spacing:-0.174px;">Bost Farm 16C-8...</div>
<div class="t m sw" style="left:989.9px;top:691.08px;font-size:10px;color:#30363c;">05-123-51450</div>
<div id="w84" class="t" style="left:1089.7px;top:689.51px;font-size:12.1px;color:#2a2e33;letter-spacing:-0.125px;">0.1823%</div>
<div id="w85" class="t" style="left:1173.4px;top:689.51px;font-size:12.1px;color:#2a2e33;letter-spacing:-0.831px;">CHEVRON</div>
<div class="abs" style="left:1299.3px;top:687.5px;width:65px;height:15.7px;background:#dcfbe6;border-radius:8px"></div>
<div id="w86" class="t sw" style="left:1306.7px;top:691.71px;font-size:8.2px;color:#1f8a4c;letter-spacing:0.119px;">PRODUCING</div>
<div class="t sw" style="right:596.1px;top:689.51px;font-size:12.1px;color:#1e2226;">$19K</div>
<div class="abs" style="left:866.7px;top:710.4px;width:592.7px;height:1px;background:#eef0f1"></div>
<div id="w87" class="t sw" style="left:873.7px;top:721.34px;font-size:12.1px;color:#1e2226;letter-spacing:-0.174px;">Bost Farm 16N-8...</div>
<div class="t m sw" style="left:989.9px;top:722.91px;font-size:10px;color:#30363c;">05-123-51448</div>
<div id="w88" class="t" style="left:1089.7px;top:721.34px;font-size:12.1px;color:#2a2e33;letter-spacing:-0.125px;">0.1823%</div>
<div class="abs" style="left:1173.4px;top:727px;width:9.6px;height:1.2px;background:#3a3e43"></div>
<div class="abs" style="left:1299.3px;top:719.3px;width:65px;height:15.7px;background:#dcfbe6;border-radius:8px"></div>
<div id="w89" class="t sw" style="left:1306.7px;top:723.54px;font-size:8.2px;color:#1f8a4c;letter-spacing:0.119px;">PRODUCING</div>
<div class="t sw" style="right:596.1px;top:721.34px;font-size:12.1px;color:#1e2226;">$7K</div>
<div class="abs" style="left:866.7px;top:742.2px;width:592.7px;height:1px;background:#eef0f1"></div>
<div id="w90" class="t sw" style="left:873.7px;top:753.17px;font-size:12.1px;color:#1e2226;letter-spacing:-0.174px;">Bost Farm 16N-8...</div>
<div class="t m sw" style="left:989.9px;top:754.75px;font-size:10px;color:#30363c;">05-123-51455</div>
<div id="w91" class="t" style="left:1089.7px;top:753.17px;font-size:12.1px;color:#2a2e33;letter-spacing:-0.125px;">0.1823%</div>
<div class="abs" style="left:1173.4px;top:759px;width:9.6px;height:1.2px;background:#3a3e43"></div>
<div class="abs" style="left:1299.3px;top:751.1px;width:65px;height:15.7px;background:#dcfbe6;border-radius:8px"></div>
<div id="w92" class="t sw" style="left:1306.7px;top:755.37px;font-size:8.2px;color:#1f8a4c;letter-spacing:0.119px;">PRODUCING</div>
<div class="t sw" style="right:596.1px;top:753.17px;font-size:12.1px;color:#1e2226;">$22K</div>
<div class="abs" style="left:866.7px;top:774.0px;width:592.7px;height:1px;background:#eef0f1"></div>
<div id="w93" class="t sw" style="left:873.7px;top:785.00px;font-size:12.1px;color:#1e2226;letter-spacing:-0.152px;">Bost Farm 1N-8...</div>
<div class="t m sw" style="left:989.9px;top:786.57px;font-size:10px;color:#30363c;">05-123-47694</div>
<div id="w94" class="t" style="left:1089.7px;top:785.00px;font-size:12.1px;color:#2a2e33;letter-spacing:-0.125px;">0.1823%</div>
<div class="abs" style="left:1173.4px;top:791px;width:9.6px;height:1.2px;background:#3a3e43"></div>
<div class="abs" style="left:1299.3px;top:782.9px;width:65px;height:15.7px;background:#dcfbe6;border-radius:8px"></div>
<div id="w95" class="t sw" style="left:1306.7px;top:787.20px;font-size:8.2px;color:#1f8a4c;letter-spacing:0.119px;">PRODUCING</div>
<div class="t sw" style="right:596.1px;top:785.00px;font-size:12.1px;color:#1e2226;">$11K</div>
<div class="abs" style="left:866.7px;top:805.8px;width:592.7px;height:1px;background:#eef0f1"></div>
<div id="w96" class="t sw" style="left:873.7px;top:816.83px;font-size:12.1px;color:#1e2226;letter-spacing:-0.152px;">Bost Farm 1N-8...</div>
<div class="t m sw" style="left:989.9px;top:818.40px;font-size:10px;color:#30363c;">05-123-47693</div>
<div id="w97" class="t" style="left:1089.7px;top:816.83px;font-size:12.1px;color:#2a2e33;letter-spacing:-0.125px;">0.1823%</div>
<div class="abs" style="left:1173.4px;top:823px;width:9.6px;height:1.2px;background:#3a3e43"></div>
<div class="abs" style="left:1299.3px;top:814.8px;width:65px;height:15.7px;background:#dcfbe6;border-radius:8px"></div>
<div id="w98" class="t sw" style="left:1306.7px;top:819.03px;font-size:8.2px;color:#1f8a4c;letter-spacing:0.119px;">PRODUCING</div>
<div class="t sw" style="right:596.1px;top:816.83px;font-size:12.1px;color:#1e2226;">$5K</div>
<div class="abs" style="left:866.7px;top:837.7px;width:592.7px;height:1px;background:#eef0f1"></div>
<div id="w99" class="t sw" style="left:873.7px;top:848.66px;font-size:12.1px;color:#1e2226;letter-spacing:-0.174px;">Bost Farm 31C-1...</div>
<div class="t m sw" style="left:989.9px;top:850.23px;font-size:10px;color:#30363c;">05-123-47662</div>
<div id="w100" class="t" style="left:1089.7px;top:848.66px;font-size:12.1px;color:#2a2e33;letter-spacing:-0.126px;">0.1823%</div>
<div class="abs" style="left:1173.4px;top:854px;width:9.6px;height:1.2px;background:#3a3e43"></div>
<div class="abs" style="left:1299.3px;top:846.6px;width:65px;height:15.7px;background:#dcfbe6;border-radius:8px"></div>
<div id="w101" class="t sw" style="left:1306.7px;top:850.86px;font-size:8.2px;color:#1f8a4c;letter-spacing:0.120px;">PRODUCING</div>
<div class="t sw" style="right:596.1px;top:848.66px;font-size:12.1px;color:#1e2226;">$10K</div>
<div class="abs" style="left:866.7px;top:869.5px;width:592.7px;height:1px;background:#eef0f1"></div>
<div id="w102" class="t sw" style="left:873.7px;top:880.49px;font-size:12.1px;color:#1e2226;letter-spacing:-0.174px;">Bost Farm 31N-1...</div>
<div class="t m sw" style="left:989.9px;top:882.06px;font-size:10px;color:#30363c;">05-123-47665</div>
<div id="w103" class="t" style="left:1089.7px;top:880.49px;font-size:12.1px;color:#2a2e33;letter-spacing:-0.126px;">0.1823%</div>
<div class="abs" style="left:1173.4px;top:886px;width:9.6px;height:1.2px;background:#3a3e43"></div>
<div class="abs" style="left:1299.3px;top:878.4px;width:65px;height:15.7px;background:#dcfbe6;border-radius:8px"></div>
<div id="w104" class="t sw" style="left:1306.7px;top:882.69px;font-size:8.2px;color:#1f8a4c;letter-spacing:0.119px;">PRODUCING</div>
<div class="t sw" style="right:596.1px;top:880.49px;font-size:12.1px;color:#1e2226;">$7K</div>
<div class="abs" style="left:866.7px;top:901.3px;width:592.7px;height:1px;background:#eef0f1"></div>
<div id="w105" class="t sw" style="left:873.7px;top:912.32px;font-size:12.1px;color:#1e2226;letter-spacing:-0.174px;">Bost Farm 31N-1...</div>
<div class="t m sw" style="left:989.9px;top:913.89px;font-size:10px;color:#30363c;">05-123-47666</div>
<div id="w106" class="t" style="left:1089.7px;top:912.32px;font-size:12.1px;color:#2a2e33;letter-spacing:-0.125px;">0.1823%</div>
<div class="abs" style="left:1173.4px;top:918px;width:9.6px;height:1.2px;background:#3a3e43"></div>
<div class="abs" style="left:1299.3px;top:910.3px;width:65px;height:15.7px;background:#dcfbe6;border-radius:8px"></div>
<div id="w107" class="t sw" style="left:1306.7px;top:914.52px;font-size:8.2px;color:#1f8a4c;letter-spacing:0.119px;">PRODUCING</div>
<div class="t sw" style="right:596.1px;top:912.32px;font-size:12.1px;color:#1e2226;">$5K</div>
<div class="abs" style="left:866.7px;top:933.2px;width:592.7px;height:1px;background:#eef0f1"></div>
<div id="w108" class="t sw" style="left:873.7px;top:944.15px;font-size:12.1px;color:#1e2226;letter-spacing:-0.174px;">Bost Farm 32C-1...</div>
<div class="t m sw" style="left:989.9px;top:945.72px;font-size:10px;color:#30363c;">05-123-47663</div>
<div id="w109" class="t" style="left:1089.7px;top:944.15px;font-size:12.1px;color:#2a2e33;letter-spacing:-0.126px;">0.1823%</div>
<div class="abs" style="left:1173.4px;top:950px;width:9.6px;height:1.2px;background:#3a3e43"></div>
<div class="abs" style="left:1299.3px;top:942.1px;width:65px;height:15.7px;background:#dcfbe6;border-radius:8px"></div>
<div id="w110" class="t sw" style="left:1306.7px;top:946.35px;font-size:8.2px;color:#1f8a4c;letter-spacing:0.120px;">PRODUCING</div>
<div class="t sw" style="right:596.1px;top:944.15px;font-size:12.1px;color:#1e2226;">$9K</div>
<div class="abs" style="left:866.7px;top:965.0px;width:592.7px;height:1px;background:#eef0f1"></div>
<div id="w111" class="t sw" style="left:873.7px;top:975.98px;font-size:12.1px;color:#1e2226;letter-spacing:-0.174px;">Bost Farm 32C-1...</div>
<div class="t m sw" style="left:989.9px;top:977.55px;font-size:10px;color:#30363c;">05-123-50256</div>
<div id="w112" class="t" style="left:1089.7px;top:975.98px;font-size:12.1px;color:#2a2e33;letter-spacing:-0.125px;">0.1823%</div>
<div class="abs" style="left:1173.4px;top:982px;width:9.6px;height:1.2px;background:#3a3e43"></div>
<div class="abs" style="left:1299.3px;top:973.9px;width:65px;height:15.7px;background:#dcfbe6;border-radius:8px"></div>
<div id="w113" class="t sw" style="left:1306.7px;top:978.18px;font-size:8.2px;color:#1f8a4c;letter-spacing:0.120px;">PRODUCING</div>
<div class="t sw" style="right:596.1px;top:975.98px;font-size:12.1px;color:#1e2226;">$21K</div>
<div id="w114" class="t" style="left:865.3px;top:1013.27px;font-size:11.5px;color:#7b838a;letter-spacing:0.332px;">Showing 1-20 of 40 wells</div>
<div class="abs" style="left:1270.7px;top:1005.2px;width:68px;height:26.4px;background:#fff;border:1px solid #eceef0;border-radius:6px"></div>
<div id="w115" class="t" style="left:1280.8px;top:1013.07px;font-size:11.5px;color:#a3a9ae;letter-spacing:0.349px;">Previous</div>
<div id="w116" class="t" style="left:1352.7px;top:1013.07px;font-size:11.5px;color:#70777d;letter-spacing:-0.043px;">Page 1 of 2</div>
<div class="abs" style="left:1425.2px;top:1005.2px;width:47.2px;height:26.4px;background:#fff;border:1px solid #e6e8ea;border-radius:6px"></div>
<div id="w117" class="t sw" style="left:1436.4px;top:1013.07px;font-size:11.5px;color:#16191c;letter-spacing:0.347px;">Next</div>
<div class="abs" style="left:1500px;top:0px;width:548px;height:1067px;background:#fafafa;border-left:1px solid #e4e6e8"></div>
<div class="abs" style="left:1508px;top:-10px;width:532.6px;height:111.3px;background:#fcfcfc;border:1px solid #e5e7e9;border-radius:8px"></div>
<div class="abs" style="left:1736.5px;top:-10px;width:1px;height:110.5px;background:#e8eaec"></div>
<div class="abs" style="left:1509px;top:29.2px;width:530.6px;height:1px;background:#e8eaec"></div>
<div class="abs" style="left:1509px;top:65.3px;width:530.6px;height:1px;background:#e8eaec"></div>
<div id="w118" class="t" style="left:1522.0px;top:5.37px;font-size:13.5px;color:#1d2125;font-weight:700;letter-spacing:-0.102px;">Formations</div>
<div id="w119" class="t" style="left:1750.5px;top:5.37px;font-size:13.5px;color:#33383d;letter-spacing:-0.035px;">Niobrara &amp; Codell</div>
<div id="w120" class="t" style="left:1522.0px;top:41.37px;font-size:13.5px;color:#1d2125;font-weight:700;letter-spacing:-0.526px;">NRI</div>
<div id="w121" class="t" style="left:1750.5px;top:41.37px;font-size:13.5px;color:#33383d;letter-spacing:0.042px;">0.182345% per well</div>
<div id="w122" class="t" style="left:1522.0px;top:77.37px;font-size:13.5px;color:#1d2125;font-weight:700;letter-spacing:-0.226px;">Revenue Period</div>
<div id="w123" class="t" style="left:1750.5px;top:77.37px;font-size:13.5px;color:#33383d;letter-spacing:0.085px;">Sep 2024 – Aug 2025</div>
<div id="w124" class="t" style="left:1508.0px;top:126.12px;font-size:19px;color:#111418;font-weight:700;letter-spacing:-0.578px;">Revenue Summary (12 months)</div>
<div class="abs" style="left:1508px;top:164.9px;width:532.6px;height:142.5px;background:#fcfcfc;border:1px solid #e5e7e9;border-radius:8px;overflow:hidden"></div>
<div class="abs" style="left:1509px;top:165.9px;width:530.6px;height:33.6px;background:#edf2f5;border-radius:7px 7px 0 0"></div>
<div class="abs" style="left:1509px;top:199.5px;width:530.6px;height:1px;background:#e5e8ea"></div>
<div class="abs" style="left:1509px;top:235.5px;width:530.6px;height:1px;background:#e8eaec"></div>
<div class="abs" style="left:1509px;top:271.4px;width:530.6px;height:1px;background:#e8eaec"></div>
<div class="abs" style="left:1805.4px;top:200px;width:1px;height:106.5px;background:#e8eaec"></div>
<div id="w125" class="t" style="left:1521.3px;top:176.07px;font-size:13.5px;color:#1d2125;font-weight:700;letter-spacing:0.145px;">Metric</div>
<div id="w126" class="t" style="left:1819.5px;top:176.07px;font-size:13.5px;color:#1d2125;font-weight:700;letter-spacing:-0.120px;">Value</div>
<div id="w127" class="t" style="left:1522.0px;top:212.07px;font-size:13.5px;color:#1d2125;font-weight:700;letter-spacing:-0.197px;">Total Gross Revenue</div>
<div id="w128" class="t" style="left:1820.0px;top:212.07px;font-size:13.5px;color:#33383d;letter-spacing:0.099px;">$145,894</div>
<div id="w129" class="t" style="left:1522.0px;top:247.37px;font-size:13.5px;color:#1d2125;font-weight:700;letter-spacing:-0.034px;">Total Deductions</div>
<div id="w130" class="t" style="left:1820.0px;top:247.37px;font-size:13.5px;color:#33383d;letter-spacing:-0.230px;">$15,341 (10.5%)</div>
<div id="w131" class="t" style="left:1522.0px;top:283.07px;font-size:13.5px;color:#1d2125;font-weight:700;letter-spacing:-0.080px;">Total Net Revenue</div>
<div id="w132" class="t" style="left:1820.0px;top:283.07px;font-size:13.5px;color:#33383d;letter-spacing:0.055px;">$130,553</div>
<div id="w133" class="t" style="left:1507.7px;top:332.22px;font-size:19px;color:#111418;font-weight:700;letter-spacing:-0.690px;">Price Realizations vs Benchmarks</div>
<div class="abs" style="left:1508px;top:371.3px;width:532.6px;height:105.4px;background:#fcfcfc;border:1px solid #e5e7e9;border-radius:8px"></div>
<div class="abs" style="left:1509px;top:372.3px;width:530.6px;height:33.1px;background:#edf2f5;border-radius:7px 7px 0 0"></div>
<div class="abs" style="left:1509px;top:405.4px;width:530.6px;height:1px;background:#e5e8ea"></div>
<div class="abs" style="left:1509px;top:441.5px;width:530.6px;height:1px;background:#e8eaec"></div>
<div class="abs" style="left:1619.5px;top:406px;width:1px;height:69.7px;background:#e8eaec"></div>
<div class="abs" style="left:1751.2px;top:406px;width:1px;height:69.7px;background:#e8eaec"></div>
<div class="abs" style="left:1895.1px;top:406px;width:1px;height:69.7px;background:#e8eaec"></div>
<div id="w134" class="t" style="left:1521.0px;top:382.07px;font-size:13.5px;color:#1d2125;font-weight:700;letter-spacing:-0.084px;">Product</div>
<div id="w135" class="t" style="left:1633.4px;top:382.07px;font-size:13.5px;color:#1d2125;font-weight:700;letter-spacing:-0.226px;">Realized</div>
<div id="w136" class="t" style="left:1765.6px;top:382.07px;font-size:13.5px;color:#1d2125;font-weight:700;letter-spacing:-0.180px;">Benchmark</div>
<div id="w137" class="t" style="left:1909.0px;top:382.07px;font-size:13.5px;color:#1d2125;font-weight:700;letter-spacing:0.089px;">Differential</div>
<div id="w138" class="t" style="left:1521.0px;top:417.27px;font-size:13.5px;color:#33383d;letter-spacing:-0.356px;">Oil</div>
<div id="w139" class="t" style="left:1633.4px;top:417.27px;font-size:13.5px;color:#33383d;letter-spacing:0.082px;">$67.66/bbl</div>
<div id="w140" class="t" style="left:1765.6px;top:417.27px;font-size:13.5px;color:#33383d;letter-spacing:-0.054px;">$68.75 WTI</div>
<div id="w141" class="t" style="left:1909.0px;top:417.27px;font-size:13.5px;color:#1d2125;font-weight:700;letter-spacing:0.480px;">-$1.09/bbl</div>
<div id="w142" class="t" style="left:1521.0px;top:452.77px;font-size:13.5px;color:#33383d;letter-spacing:-0.881px;">Gas</div>
<div id="w143" class="t" style="left:1633.4px;top:452.77px;font-size:13.5px;color:#33383d;letter-spacing:0.151px;">$2.78/mcf</div>
<div id="w144" class="t" style="left:1765.6px;top:452.77px;font-size:13.5px;color:#33383d;letter-spacing:-0.292px;">$3.14 HH</div>
<div id="w145" class="t" style="left:1909.0px;top:452.77px;font-size:13.5px;color:#1d2125;font-weight:700;letter-spacing:0.739px;">-$0.36/mcf</div>
<div id="w146" class="t" style="left:1507.7px;top:499.12px;font-size:13.8px;color:#262a2e;letter-spacing:-0.075px;">The differentials are reasonable for DJ Basin - slight discounts to benchmark prices.</div>
<div class="abs" style="left:1495.3px;top:528px;width:9.7px;height:12.5px;background:#e3e6e9;border-radius:2px"></div>
<svg class="abs" style="left:1497.5px;top:530.5px" width="6" height="8" viewBox="0 0 6 8"><g fill="#555"><rect x="0.5" y="0.5" width="2" height="1.4"/><rect x="3.5" y="0.5" width="2" height="1.4"/><rect x="0.5" y="3.3" width="2" height="1.4"/><rect x="3.5" y="3.3" width="2" height="1.4"/><rect x="0.5" y="6.1" width="2" height="1.4"/><rect x="3.5" y="6.1" width="2" height="1.4"/></g></svg>
<div id="w147" class="t" style="left:1507.7px;top:542.82px;font-size:19px;color:#111418;font-weight:700;letter-spacing:-0.553px;">Documents Reviewed</div>
<div class="abs" style="left:1513.8px;top:590.8px;width:4px;height:4px;border-radius:50%;background:#262a2e"></div>
<div class="t" style="left:1527.7px;top:585.12px;font-size:13.8px;color:#33383d;"><span id="w148" style="font-weight:700;color:#1d2125;letter-spacing:-0.373px;">Well List</span><span id="w149" style="letter-spacing:-0.285px;"> with APIs and NRIs</span></div>
<div class="abs" style="left:1513.8px;top:619.2px;width:4px;height:4px;border-radius:50%;background:#262a2e"></div>
<div class="t" style="left:1527.7px;top:613.52px;font-size:13.8px;color:#33383d;"><span id="w150" style="font-weight:700;color:#1d2125;letter-spacing:-0.224px;">Revenue/Check Stubs</span><span id="w151" style="letter-spacing:-0.102px;"> (12 months of detailed data)</span></div>
<div class="abs" style="left:1513.8px;top:647.6px;width:4px;height:4px;border-radius:50%;background:#262a2e"></div>
<div class="t" style="left:1527.7px;top:641.92px;font-size:13.8px;color:#33383d;"><span id="w152" style="font-weight:700;color:#1d2125;letter-spacing:-0.274px;">Source Deeds</span><span id="w153" style="letter-spacing:-0.210px;"> (2018 conveyances)</span></div>
<div class="abs" style="left:1513.8px;top:676.0px;width:4px;height:4px;border-radius:50%;background:#262a2e"></div>
<div class="t" style="left:1527.7px;top:670.32px;font-size:13.8px;color:#33383d;"><span id="w154" style="font-weight:700;color:#1d2125;letter-spacing:-0.476px;">Oil &amp; Gas Lease</span><span id="w155" style="letter-spacing:-0.240px;"> (original 1981 lease)</span></div>
<div class="abs" style="left:1513.8px;top:704.4px;width:4px;height:4px;border-radius:50%;background:#262a2e"></div>
<div class="t" style="left:1527.7px;top:698.72px;font-size:13.8px;color:#33383d;"><span id="w156" style="font-weight:700;color:#1d2125;letter-spacing:-0.234px;">Production Reports</span><span id="w157" style="letter-spacing:-0.223px;"> and curves</span></div>
<div class="abs" style="left:1513.8px;top:732.8px;width:4px;height:4px;border-radius:50%;background:#262a2e"></div>
<div class="t" style="left:1527.7px;top:727.12px;font-size:13.8px;color:#33383d;"><span id="w158" style="font-weight:700;color:#1d2125;letter-spacing:-0.248px;">Outgoing Conveyance Deed</span></div>
<div id="w159" class="t" style="left:1507.7px;top:768.52px;font-size:19px;color:#111418;font-weight:700;letter-spacing:-0.705px;">Key Observations</div>
<div class="t" style="left:1512.3px;top:812.12px;font-size:13.8px;color:#262a2e;">1.</div>
<div class="t" style="left:1527.7px;top:812.12px;font-size:13.8px;color:#33383d;"><span id="w160" style="font-weight:700;color:#1d2125;letter-spacing:-0.117px;">Uniform interest</span><span id="w161" style="letter-spacing:-0.157px;"> - Same 0.182345% NRI across all 40 wells suggests a single</span></div>
<div class="t" style="left:1512.3px;top:862.02px;font-size:13.8px;color:#262a2e;">2.</div>
<div class="t" style="left:1527.7px;top:862.02px;font-size:13.8px;color:#33383d;"><span id="w162" style="font-weight:700;color:#1d2125;letter-spacing:-0.119px;">Mature production</span><span id="w163" style="letter-spacing:0.016px;"> - First production dates range from 2019-2022</span></div>
<div class="t" style="left:1512.3px;top:890.12px;font-size:13.8px;color:#262a2e;">3.</div>
<div class="t" style="left:1527.7px;top:890.12px;font-size:13.8px;color:#33383d;"><span id="w164" style="font-weight:700;color:#1d2125;letter-spacing:-0.273px;">Active wells</span><span id="w165" style="letter-spacing:-0.109px;"> - All 40 wells have revenue in the trailing 12 months</span></div>
<div class="t" style="left:1512.3px;top:918.32px;font-size:13.8px;color:#262a2e;">4.</div>
<div class="t" style="left:1527.7px;top:918.32px;font-size:13.8px;color:#33383d;"><span id="w166" style="font-weight:700;color:#1d2125;letter-spacing:0.087px;">39 of 40 wells</span><span id="w167" style="letter-spacing:-0.102px;"> have forecast data for valuation</span></div>
<div id="w168" class="t" style="left:1527.7px;top:833.82px;font-size:13.8px;color:#33383d;letter-spacing:-0.059px;">mineral tract</div>
<div class="t" style="left:1507.7px;top:957.72px;font-size:13.8px;color:#262a2e;"><span id="w169" style="letter-spacing:-0.313px;">Would you like me to </span><span id="w170" style="font-weight:700;color:#1d2125;letter-spacing:-0.274px;">run a valuation</span><span id="w171" style="letter-spacing:-0.126px;"> on this package to calculate the PV-10?</span></div>
<div class="abs" style="left:1514.7px;top:1005.2px;width:524.1px;height:51.6px;background:#f7f8f9;border:1px solid #e3e5e8;border-radius:14px"></div>
<svg class="abs" style="left:1531.5px;top:1024.5px" width="16" height="16" viewBox="0 0 24 24"><path d="M21.4 11.1l-9.2 9.2a6 6 0 0 1-8.5-8.5l9.2-9.2a4 4 0 0 1 5.7 5.7l-9.2 9.2a2 2 0 0 1-2.8-2.8l8.5-8.5" fill="none" stroke="#7d848a" stroke-width="2.2" stroke-linecap="round" stroke-linejoin="round"/></svg>
<div id="w172" class="t" style="left:1561.8px;top:1025.24px;font-size:12px;color:#8a9096;letter-spacing:-0.054px;">Message Energy Insights...</div>
<div class="abs" style="left:1998.8px;top:1017.8px;width:30px;height:30px;border-radius:11px;background:#5db7e2"></div>
<svg class="abs" style="left:2007.8px;top:1027px" width="12" height="12" viewBox="0 0 12 12"><g fill="none" stroke="#fff" stroke-width="1.4" stroke-linecap="round" stroke-linejoin="round"><path d="M6 10.5V1.8M2.3 5.3L6 1.6L9.7 5.3"/></g></svg>
</body></html>
